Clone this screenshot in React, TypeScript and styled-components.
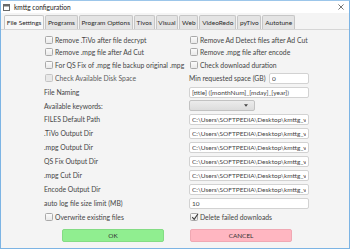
import React from 'react'
import styled, { createGlobalStyle } from 'styled-components'

const GlobalStyle = createGlobalStyle`
  html, body {
    margin: 0;
    padding: 0;
    background: #ffffff;
  }
  body {
    font-family: 'Segoe UI', Lato, 'Open Sans', sans-serif;
    font-size: 6.8px;
    color: #454545;
  }
  * {
    box-sizing: border-box;
  }
`

const tabs = ['File Settings', 'Programs', 'Program Options', 'Tivos', 'Visual', 'Web', 'VideoRedo', 'pyTivo', 'Autotune']

const pathValue = 'C:\\Users\\SOFTPEDIA\\Desktop\\kmttg_v2p0m\\kmttg_v2p0m'

const dirRows = [
  'FILES Default Path',
  '.TiVo Output Dir',
  '.mpg Output Dir',
  'QS Fix Output Dir',
  '.mpg Cut Dir',
  'Encode Output Dir',
]

const App: React.FC = () => {
  return (
    <>
      <GlobalStyle />
      <Window>
        <TitleBar>
          <TitleIcon viewBox="0 0 7 7">
            <rect x="0.5" y="0.5" width="6" height="6" fill="#ffffff" stroke="#6a6a6a" />
            <rect x="0.5" y="0.5" width="6" height="2" fill="#6a6a6a" />
          </TitleIcon>
          <TitleText>kmttg configuration</TitleText>
          <CloseIcon viewBox="0 0 7 7">
            <path d="M0.5 0.5 L6.5 6.5 M6.5 0.5 L0.5 6.5" stroke="#333" strokeWidth="0.8" />
          </CloseIcon>
        </TitleBar>

        <TabBar>
          {tabs.map((t, i) => (
            <Tab key={t} $active={i === 0}>{t}</Tab>
          ))}
        </TabBar>

        <Content>
          <FormGrid>
            <CheckRow><Box /><span>Remove .TiVo after file decrypt</span></CheckRow>
            <CheckRow><Box /><span>Remove Ad Detect files after Ad Cut</span></CheckRow>

            <CheckRow><Box /><span>Remove .mpg file after Ad Cut</span></CheckRow>
            <CheckRow><Box /><span>Remove .mpg file after encode</span></CheckRow>

            <CheckRow><Box /><span>For QS Fix of .mpg file backup original .mpg</span></CheckRow>
            <CheckRow><Box /><span>Check download duration</span></CheckRow>

            <CheckRow $disabled><Box $disabled /><span>Check Available Disk Space</span></CheckRow>
            <Cell>
              <span>Min requested space (GB)</span>
              <SmallInput readOnly value="0" />
            </Cell>

            <Label>File Naming</Label>
            <Cell><TextField readOnly value="[title] ([monthNum]_[mday]_[year])" /></Cell>

            <Label>Available keywords:</Label>
            <Cell>
              <Combo>
                <ComboArrow viewBox="0 0 5 3">
                  <path d="M0 0 L5 0 L2.5 3 Z" fill="#444" />
                </ComboArrow>
              </Combo>
            </Cell>

            {dirRows.map((d) => (
              <React.Fragment key={d}>
                <Label>{d}</Label>
                <Cell><TextField readOnly value={pathValue} /></Cell>
              </React.Fragment>
            ))}

            <Label>auto log file size limit (MB)</Label>
            <Cell><TextField readOnly value="10" /></Cell>

            <CheckRow><Box /><span>Overwrite existing files</span></CheckRow>
            <CheckRow>
              <Box>
                <CheckMark viewBox="0 0 8 8">
                  <path d="M1.2 4.2 L3.2 6.4 L7 0.8" fill="none" stroke="#3a3a3a" strokeWidth="1.1" />
                </CheckMark>
              </Box>
              <span>Delete failed downloads</span>
            </CheckRow>
          </FormGrid>

          <ButtonRow>
            <DialogButton $color="#90ee90" $border="#84dc84">OK</DialogButton>
            <DialogButton $color="#ffb6c1" $border="#f0a8b3">CANCEL</DialogButton>
          </ButtonRow>
        </Content>
      </Window>
    </>
  )
}

const Window = styled.div`
  width: 350px;
  height: 249px;
  border: 1px solid #7cb4e4;
  border-top-color: #9cc6ea;
  display: flex;
  flex-direction: column;
  background: #f4f4f4;
  overflow: hidden;
`

const TitleBar = styled.div`
  height: 12px;
  flex: none;
  background: #ffffff;
  display: flex;
  align-items: center;
  padding: 0 5px 0 2px;
`

const TitleIcon = styled.svg`
  width: 7px;
  height: 7px;
  margin-right: 4px;
`

const TitleText = styled.div`
  flex: 1;
  font-size: 6.6px;
  color: #222222;
`

const CloseIcon = styled.svg`
  width: 6px;
  height: 6px;
`

const TabBar = styled.div`
  height: 17px;
  flex: none;
  display: flex;
  align-items: flex-end;
  gap: 1px;
  padding: 0 0 0 3px;
  border-bottom: 1px solid #d6d6d6;
`

const Tab = styled.div<{ $active?: boolean }>`
  height: 14px;
  padding: 0 1.8px;
  display: flex;
  align-items: center;
  border: 1px solid #c6c6c6;
  border-bottom: none;
  border-radius: 2px 2px 0 0;
  background: ${(p) => (p.$active ? '#f8f8f8' : '#e4e4e4')};
  color: #2a2a2a;
  font-size: 6.5px;
  white-space: nowrap;
`

const Content = styled.div`
  flex: 1;
  padding: 4px 0 0 43px;
  display: flex;
  flex-direction: column;
`

const FormGrid = styled.div`
  display: grid;
  grid-template-columns: 145px 120px;
  grid-template-rows: 12px 12px 13px 14px 14px 13px 14px 14px 14px 14px 14px 14px 14px 14px;
`

const Cell = styled.div`
  display: flex;
  align-items: center;
  justify-content: space-between;
  white-space: nowrap;
`

const Label = styled.div`
  display: flex;
  align-items: center;
  white-space: nowrap;
`

const CheckRow = styled.div<{ $disabled?: boolean }>`
  display: flex;
  align-items: center;
  gap: 2px;
  white-space: nowrap;
  padding-left: 1px;
  color: ${(p) => (p.$disabled ? '#606060' : '#454545')};
`

const Box = styled.div<{ $disabled?: boolean }>`
  position: relative;
  width: 8px;
  height: 8px;
  flex: none;
  border: 1px solid ${(p) => (p.$disabled ? '#c4c4c4' : '#a9a9a9')};
  border-radius: 1.5px;
  background: ${(p) => (p.$disabled ? '#e8e8e8' : 'linear-gradient(#fbfbfb, #e9e9e9)')};
`

const CheckMark = styled.svg`
  position: absolute;
  left: 0;
  top: -1px;
  width: 8px;
  height: 8px;
`

const TextField = styled.input`
  width: 120px;
  height: 11px;
  padding: 0 2px;
  margin: 0;
  border: 1px solid #d2d2d2;
  border-radius: 2px;
  background: #ffffff;
  font-family: inherit;
  font-size: 6.5px;
  color: #454545;
  outline: none;
`

const SmallInput = styled(TextField)`
  width: 40px;
`

const Combo = styled.div`
  width: 66px;
  height: 11px;
  border: 1px solid #c2c2c2;
  border-radius: 2px;
  background: linear-gradient(#ececec, #dcdcdc);
  display: flex;
  align-items: center;
  justify-content: flex-end;
  padding-right: 6px;
`

const ComboArrow = styled.svg`
  width: 4px;
  height: 3px;
`

const ButtonRow = styled.div`
  display: flex;
  gap: 26px;
  padding-left: 18px;
  margin-top: 5px;
`

const DialogButton = styled.div<{ $color: string; $border: string }>`
  width: 102px;
  height: 13px;
  display: flex;
  align-items: center;
  justify-content: center;
  background: ${(p) => p.$color};
  border: 1px solid ${(p) => p.$border};
  border-radius: 2px;
  font-size: 6.4px;
  color: #333333;
`

export default App
